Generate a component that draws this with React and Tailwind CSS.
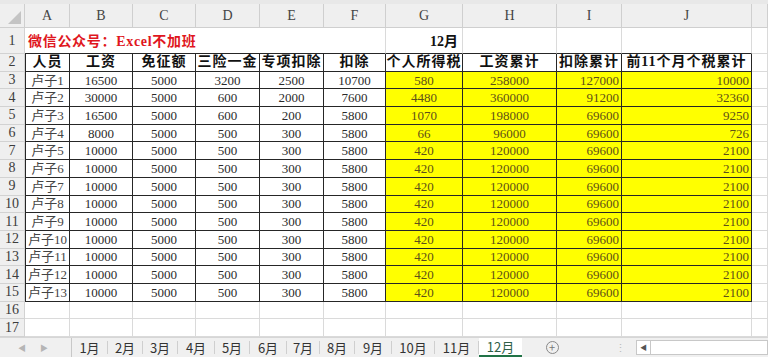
import React from "react";

// ───────────────────────────────────────────────────────────────────────────────
// data

const COLS = ["A", "B", "C", "D", "E", "F", "G", "H", "I", "J", ""];
const HEAD = ["人员", "工资", "免征额", "三险一金", "专项扣除", "扣除", "个人所得税", "工资累计", "扣除累计", "前11个月个税累计"];

const ROWS = [
  [16500, 5000, 3200, 2500, 10700, 580, 258000, 127000, 10000],
  [30000, 5000, 600, 2000, 7600, 4480, 360000, 91200, 32360],
  [16500, 5000, 600, 200, 5800, 1070, 198000, 69600, 9250],
  [8000, 5000, 500, 300, 5800, 66, 96000, 69600, 726],
  ...Array.from({ length: 9 }, () => [10000, 5000, 500, 300, 5800, 420, 120000, 69600, 2100]),
];

const TABS = [
  ["1月", "w-[36px]"],
  ["2月", "w-[35px]"],
  ["3月", "w-[35px]"],
  ["4月", "w-[37px]"],
  ["5月", "w-[35px]"],
  ["6月", "w-[37px]"],
  ["7月", "w-[33px]"],
  ["8月", "w-[35px]"],
  ["9月", "w-[37px]"],
  ["10月", "w-[43px]"],
  ["11月", "w-[44px]"],
];

// row head + A..J + one more column on the right
const grid = "grid grid-cols-[25px_45px_63px_63px_64px_64px_62px_77px_94px_65px_130px_1fr]";
const font = "font-['Liberation_Serif','Noto_Sans_CJK_SC',serif]";
const gridLine = "border-r border-b border-[#dadada]";
const ink = "border-r border-b border-[#262626]";
const rowH = "h-[17.7px]";

// ───────────────────────────────────────────────────────────────────────────────
// pieces

function RowHead({ n, h = rowH }) {
  return (
    <div
      className={`${h} flex items-center justify-center bg-[#efefef] border-r border-b border-[#d2d2d2] text-[14px] text-[#3c3c3c] leading-none`}
    >
      {n}
    </div>
  );
}

function Cell({ children, className = "" }) {
  return (
    <div className={`flex items-center overflow-hidden whitespace-nowrap leading-none ${className}`}>
      {children}
    </div>
  );
}

function DataRow({ r, i }) {
  const name = `卢子${i + 1}`;
  return (
    <>
      <RowHead n={i + 3} />
      <Cell className={`${ink} border-l justify-center text-[#444]`}>{name}</Cell>
      {r.map((v, j) => {
        const yellow = j >= 5 ? "bg-[#ffff00] text-[#5e5018]" : "text-[#2b2b2b]";
        const align = j >= 7 ? "justify-end pr-[2px]" : "justify-center";
        return (
          <Cell key={j} className={`${ink} ${yellow} ${align}`}>
            {v}
          </Cell>
        );
      })}
      <div className={gridLine} />
    </>
  );
}

function EmptyRow({ n }) {
  return (
    <>
      <RowHead n={n} />
      {COLS.map((c, j) => (
        <div key={j} className={`${rowH} ${gridLine}`} />
      ))}
    </>
  );
}

// ───────────────────────────────────────────────────────────────────────────────
// page

export default function App() {
  return (
    <div className={`w-[768px] h-[357px] overflow-hidden bg-white flex flex-col ${font} text-[13px] text-[#1f1f1f]`}>
      {/* top strip */}
      <div className="h-[4px] bg-[#e8e8e8]" />

      {/* column letters */}
      <div className={`${grid} h-[24px] bg-[#efefef]`}>
        <div className="relative border-r border-b border-[#cfcfcf]">
          <div className="absolute right-[3px] bottom-[3px] w-0 h-0 border-l-[13px] border-l-transparent border-b-[13px] border-b-[#c4c4c4]" />
        </div>
        {COLS.map((c, j) => (
          <div
            key={j}
            className="flex items-center justify-center border-r border-b border-[#cfcfcf] text-[14px] text-[#444]"
          >
            {c}
          </div>
        ))}
      </div>

      <div className={`${grid} flex-1 auto-rows-min`}>
        {/* row 1 */}
        <RowHead n={1} h="h-[26px]" />
        <div className="col-span-6 h-[26px] flex items-end pb-[4px] pl-[3px] border-b border-r border-[#262626] border-r-[#dadada] text-[14px] tracking-[0.7px] font-bold text-[#e0171e] whitespace-nowrap leading-none">
          微信公众号：Excel不加班
        </div>
        <Cell className="h-[26px] !items-end pb-[4px] justify-end pr-[4px] border-r border-b border-[#dadada] border-b-[#262626] text-[14px] font-semibold text-[#111]">
          12月
        </Cell>
        <div className="h-[26px] border-r border-b border-[#dadada] border-b-[#262626]" />
        <div className="h-[26px] border-r border-b border-[#dadada] border-b-[#262626]" />
        <div className="h-[26px] border-r border-b border-[#dadada] border-b-[#262626]" />
        <div className={`h-[26px] ${gridLine}`} />

        {/* row 2 */}
        <RowHead n={2} />
        {HEAD.map((h, j) => (
          <Cell
            key={j}
            className={`${ink} ${j === 0 ? "border-l" : ""} justify-center font-bold text-[14px] tracking-[1px] text-[#111]`}
          >
            {h}
          </Cell>
        ))}
        <div className={gridLine} />

        {ROWS.map((r, i) => (
          <DataRow key={i} r={r} i={i} />
        ))}

        <EmptyRow n={16} />
        <EmptyRow n={17} />
      </div>

      {/* sheet tabs */}
      <div className="h-[20px] shrink-0 flex items-stretch bg-[#f0f0f0] border-t border-[#d6d6d6] font-['Noto_Sans_CJK_SC',sans-serif] text-[13px] text-[#333]">
        <div className="w-[72px] flex items-center gap-[14px] pl-[18px] text-[8px] text-[#b5b5b5] border-r border-[#c8c8c8]">
          <span>◀</span>
          <span>▶</span>
        </div>
        {TABS.map(([t, w]) => (
          <div key={t} className={`${w} flex items-center justify-center border-r border-[#cfcfcf] my-[3px] leading-none`}>
            {t}
          </div>
        ))}
        <div className="w-[43px] flex items-center justify-center bg-white border-b-2 border-[#217346] text-[#2f5f48] leading-none">
          12月
        </div>
        <div className="w-[60px] flex items-center justify-center">
          <span className="w-[13px] h-[13px] rounded-full border border-[#888] flex items-center justify-center text-[11px] leading-none text-[#777]">
            +
          </span>
        </div>
        <div className="w-[54px] flex items-center justify-end pr-[10px] text-[11px] text-[#bbb]">⋮</div>
        <div className="w-[14px] flex items-center justify-center text-[7px] text-[#555] bg-white border-l border-y border-[#c8c8c8] my-[2px]">
          ◀
        </div>
        <div className="flex-1 bg-white border border-[#c8c8c8] my-[2px]" />
      </div>
    </div>
  );
}
